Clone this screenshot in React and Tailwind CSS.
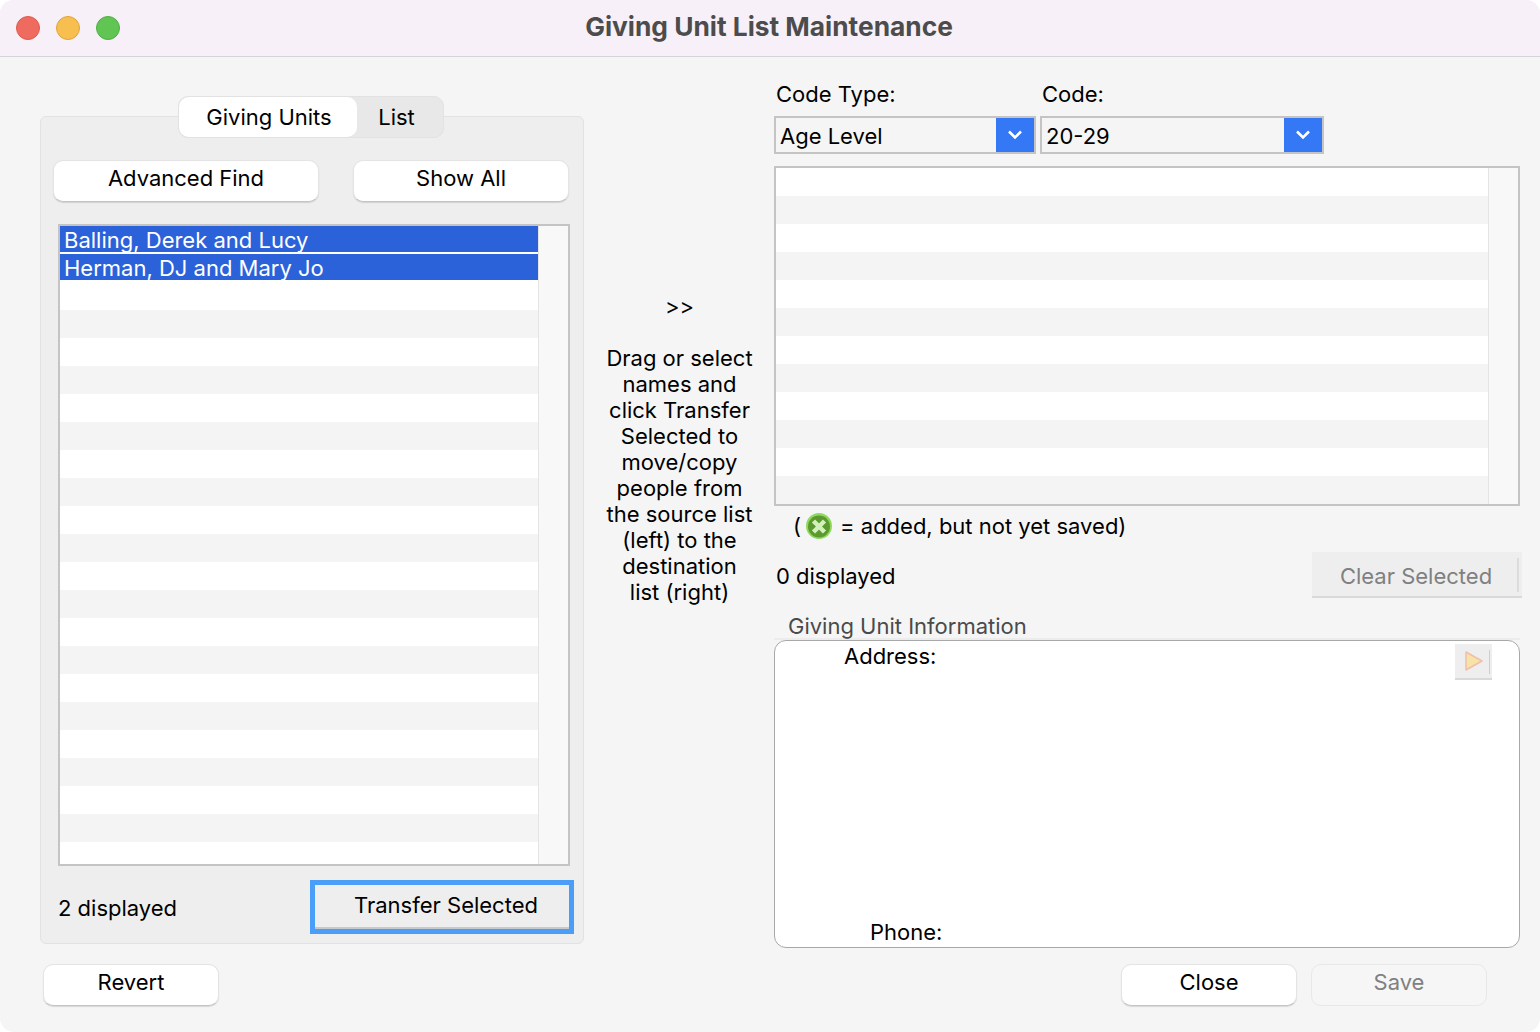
import React from "react";

const leftRows = Array.from({ length: 23 });
const rightRows = Array.from({ length: 12 });

function PlainButton({ className = "", children }) {
  return (
    <button className={"h-[42px] rounded-[10px] bg-white border border-[#e4e4e4] border-b-[#c4c4c4] shadow-[0_1px_1px_rgba(0,0,0,0.12)] text-black flex items-center justify-center pb-[6px] " + className}>
      {children}
    </button>
  );
}

function Select({ className = "", value }) {
  return (
    <div className={"h-[38px] border-2 border-[#c4c4c4] bg-[#f5f5f5] flex items-center justify-between " + className}>
      <span className="pl-[4px] pt-[2px] text-black">{value}</span>
      <span className="w-[38px] h-full bg-[#3478f6] flex items-center justify-center">
        <svg width="16" height="12" viewBox="0 0 16 12" fill="none" stroke="white" strokeWidth="2.6">
          <path d="M2 2.5 L8 8.5 L14 2.5" />
        </svg>
      </span>
    </div>
  );
}

function ListBox({ rows, className = "" }) {
  return (
    <div className={"border-2 border-[#c4c4c4] flex bg-white overflow-hidden " + className}>
      <div className="flex-1 flex flex-col">
        {rows}
      </div>
      <div className="w-[30px] bg-[#f8f8f8] border-l border-[#e4e4e4]"></div>
    </div>
  );
}

function App() {
  return (
    <div className="w-[1540px] h-[1032px] bg-white overflow-hidden font-['Inter',sans-serif] text-[22px] leading-[26px]">
      <div className="w-full h-full rounded-[14px] overflow-hidden bg-[#f5f5f5] flex flex-col">
        {/* Title bar */}
        <div className="h-[57px] shrink-0 bg-[#f7f0f8] border-b border-[#d6d3d8] flex items-center relative">
          <div className="flex gap-[16px] pl-[16px]">
            <span className="w-6 h-6 rounded-full bg-[#ef6b60] border border-[#dd5a50]"></span>
            <span className="w-6 h-6 rounded-full bg-[#f6bf4f] border border-[#dfa53c]"></span>
            <span className="w-6 h-6 rounded-full bg-[#61c554] border border-[#52ad46]"></span>
          </div>
          <div className="absolute left-0 right-0 pr-[2px] pb-[2px] text-center font-bold text-[#4c4c4c] text-[26.3px]">
            Giving Unit List Maintenance
          </div>
        </div>

        <div className="flex flex-1">
          {/* Left column */}
          <div className="w-[544px] ml-[40px] shrink-0 pt-[59px]">
            <div className="h-[828px] bg-[#eeeeee] border border-[#e2e2e2] rounded-[6px] flex flex-col">
              <div className="-mt-[21px] flex justify-center pr-[3px]">
                <div className="w-[266px] h-[42px] rounded-[10px] bg-[#e8e8e8] border border-[#e2e2e2] flex">
                  <div className="w-[178px] bg-white rounded-[10px] flex items-center justify-center text-black pl-[3px]">Giving Units</div>
                  <div className="flex-1 flex items-center justify-center text-black pr-[6px]">List</div>
                </div>
              </div>
              <div className="flex justify-between pl-[12px] pr-[14px] mt-[22px]">
                <PlainButton className="w-[266px]">Advanced Find</PlainButton>
                <PlainButton className="w-[216px]">Show All</PlainButton>
              </div>
              <ListBox
                className="h-[642px] mt-[22px] ml-[17px] mr-[13px]"
                rows={leftRows.map((_, i) => {
                  if (i === 0) return <div key={i} className="h-[28px] shrink-0"><div className="h-[26px] bg-[#2b62d9] text-white pl-[4px] pt-[1px]">Balling, Derek and Lucy</div></div>;
                  if (i === 1) return <div key={i} className="h-[28px] shrink-0"><div className="h-[26px] bg-[#2b62d9] text-white pl-[4px] pt-[1px]">Herman, DJ and Mary Jo</div></div>;
                  return <div key={i} className={"h-[28px] shrink-0 " + (i % 2 === 1 ? "bg-[#f4f4f4]" : "bg-white")}></div>;
                })}
              />
              <div className="flex justify-between mt-[14px] pl-[17px] pr-[9px]">
                <span className="text-black pt-[15px]">2 displayed</span>
                <button className="w-[264px] h-[54px] border-[5px] border-[#4a9ef8] bg-[#eeeeee] text-black">
                  <span className="flex h-full items-center justify-center border-b-2 border-[#c9c9c9] pb-[3px] pl-[8px]">Transfer Selected</span>
                </button>
              </div>
            </div>
            <div className="mt-[20px] pl-[3px]">
              <PlainButton className="w-[176px]">Revert</PlainButton>
            </div>
          </div>

          {/* Middle instructions */}
          <div className="w-[190px] shrink-0 flex flex-col items-center text-black text-center pt-[236px] pl-[1px]">
            <div className="h-[25px]">&gt;&gt;</div>
            <div className="mt-[27px]">
              Drag or select<br />names and<br />click Transfer<br />Selected to<br />move/copy<br />people from<br />the source list<br />(left) to the<br />destination<br />list (right)
            </div>
          </div>

          {/* Right column */}
          <div className="w-[746px] shrink-0 pt-[24px] text-black">
            <div className="flex h-[26px] pl-[2px]">
              <span className="w-[266px]">Code Type:</span>
              <span>Code:</span>
            </div>
            <div className="flex gap-[4px] mt-[9px]">
              <Select className="w-[262px]" value="Age Level" />
              <Select className="w-[284px]" value="20-29" />
            </div>
            <ListBox
              className="h-[340px] mt-[12px]"
              rows={rightRows.map((_, i) => (
                <div key={i} className={"h-[28px] shrink-0 " + (i % 2 === 1 ? "bg-[#f4f4f4]" : "bg-white")}></div>
              ))}
            />
            <div className="flex items-center h-[26px] mt-[7px] pl-[19px]">
              <span>(</span>
              <svg className="ml-[4px]" width="28" height="26" viewBox="0 0 28 26">
                <circle cx="14" cy="13" r="13" fill="#8fd95f" />
                <circle cx="14" cy="13.5" r="11" fill="#5c9a30" />
                <path d="M8.5 8 L19.5 19 M19.5 8 L8.5 19" stroke="#d4f0bc" strokeWidth="4.5" />
              </svg>
              <span className="ml-[7px]">= added, but not yet saved)</span>
            </div>
            <div className="flex items-center justify-between mt-[13px] h-[46px]">
              <span className="pl-[2px] pt-[1px]">0 displayed</span>
              <div className="relative -mr-[2px] w-[210px] h-full bg-[#eeeeee] border-b-2 border-[#d9d9d9] flex items-center justify-center text-[#808080] pr-[2px] pt-[3px]">
                Clear Selected
                <span className="absolute right-[3px] top-[6px] h-[34px] w-[2px] bg-[#dcdcdc]"></span>
              </div>
            </div>
            <div className="h-[25px] mt-[15px] pl-[14px] text-[#4a4a4a]">Giving Unit Information</div>
            <div className="h-[2px] bg-[#ececec]"></div>
            <div className="h-[308px] bg-white border border-[#a8a8a8] rounded-[12px] flex flex-col justify-between">
              <div className="flex justify-between pr-[27px] pt-[3px]">
                <span className="pl-[69px] -mt-[1px]">Address:</span>
                <div className="relative w-[37px] h-[36px] bg-[#eeeeee] border-b-2 border-[#d9d9d9] flex items-center pl-[9px]">
                  <svg width="20" height="22" viewBox="0 0 20 22">
                    <path d="M2 2 L18 11 L2 20 Z" fill="#f7e2a8" stroke="#f0bfa8" strokeWidth="1.5" strokeLinejoin="round" />
                  </svg>
                  <span className="absolute right-[2px] top-[6px] h-[24px] w-[1px] bg-[#cfcfcf]"></span>
                </div>
              </div>
              <span className="pl-[95px] pb-[2px]">Phone:</span>
            </div>
            <div className="flex gap-[14px] mt-[16px] pl-[347px]">
              <PlainButton className="w-[176px]">Close</PlainButton>
              <button className="w-[176px] h-[42px] rounded-[10px] bg-[#f6f6f6] border border-[#e8e8e8] text-[#808080] flex items-center justify-center pb-[6px]">Save</button>
            </div>
          </div>
        </div>
      </div>
    </div>
  );
}

export default App;
